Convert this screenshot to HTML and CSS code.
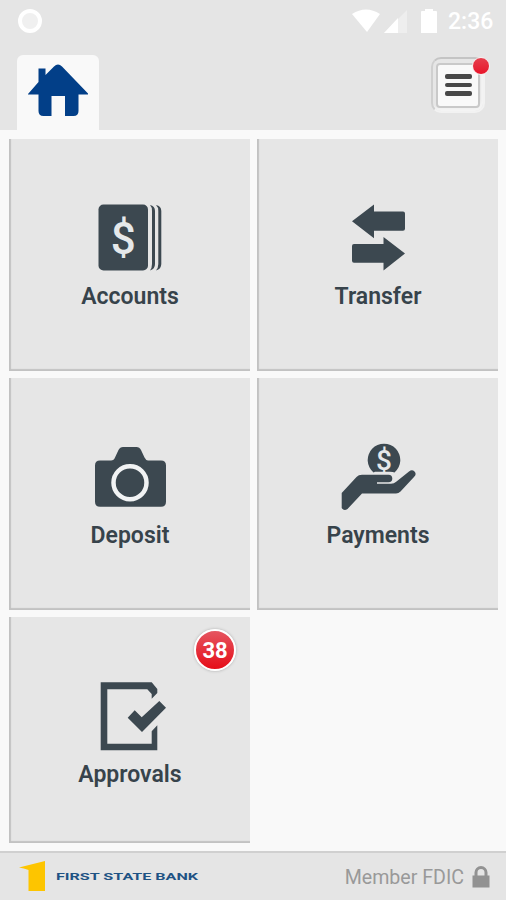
FILE: index.html
```html
<!DOCTYPE html>
<html lang="en">

<head>
    <meta charset="utf-8">
    <meta name="viewport" content="width=device-width, initial-scale=1.0">
    <title>First State Bank</title>
    <link rel="stylesheet" href="styles.css">
</head>

<body>
    <header>
        <div class="status">
            <span class="ring"></span>
            <svg class="signals" width="90" height="26" viewBox="0 0 90 26">
                <path d="M0 6Q14-3 28 6L15 24Z" />
                <path d="M32 25L55 2V25Z" opacity=".35" />
                <path d="M32 25L46 10V25Z" />
                <path d="M69 4Q69 3 70 3H73V1H81V3H84Q85 3 85 4V25H69Z" />
            </svg>
            <span class="time">2:36</span>
        </div>
        <nav>
            <a class="tab">
                <svg width="62" height="58" viewBox="0 0 62 58">
                    <path d="M1 34L11.5 22V8.5h7V15L27 6.5Q31 2.500 35 6.500L61 33.500V34.500H51.500V51Q51.500 56 46.500 56H38V36H24.500V56H16.500Q11.500 56 11.500 51V34.500H1Z" />
                </svg>
            </a>
            <button class="menu">
                <span class="lines"><i></i><i></i><i></i></span>
                <span class="dot"></span>
            </button>
        </nav>
    </header>

    <main>
        <article class="tile">
            <svg class="icon" width="80" height="80" viewBox="0 0 80 80">
                <rect x="8.500" y="4.500" width="49.500" height="66" rx="5" />
                <path d="M60 5Q65 6 65 11V64Q65 69 60 70.500Q62 68 62 64V11Q62 7 60 5Z" />
                <path d="M66 5Q71.300 6 71.300 11V64Q71.300 69 66 70.500Q68.300 68 68.300 64V11Q68.300 7 66 5Z" />
                <text class="dollar" x="33.300" y="53.500" font-size="44">$</text>
            </svg>
            <h2>Accounts</h2>
        </article>
        <article class="tile">
            <svg class="icon" width="80" height="80" viewBox="0 0 80 80">
                <path d="M14 21.300L36 4.500V11.500H65Q67 11.500 67 13.500V28.700Q67 30.700 65 30.700H36V38.300Z" />
                <path d="M67 53.500L45.500 37V44H16Q14 44 14 46V60.700Q14 62.700 16 62.700H45.500V70.500Z" />
            </svg>
            <h2>Transfer</h2>
        </article>
        <article class="tile">
            <svg class="icon" width="80" height="80" viewBox="0 0 80 80">
                <path d="M10 21.500H21Q24 21.500 25 18.500L28.500 11Q30 8 33 8H46.500Q49.500 8 51 11L54.500 18.500Q56 21.500 58 21.500H71Q76 21.500 76 26.500V62.700Q76 67.700 71 67.700H10Q5 67.700 5 62.700V26.500Q5 21.500 10 21.500Z" />
                <circle class="lens" cx="40" cy="43.700" r="16.500" />
            </svg>
            <h2>Deposit</h2>
        </article>
        <article class="tile">
            <svg class="icon" width="80" height="80" viewBox="0 0 80 80">
                <path d="M35.500 33.500A16.300 16.300 0 1 1 56.500 33.500Q55 32.800 52 32.800H37Z" />
                <text class="dollar" x="46" y="30.500" font-size="28">$</text>
                <path d="M3.700 54L18.500 38Q20.500 35.700 24 35.700H50.500Q54.300 35.700 54.300 39.500Q54.300 43.300 50.500 43.300H39V44.800H53Q56 44.800 58.500 42.500L71 32.500Q74 30 76.500 32.500Q79 35 76 38L62.500 52.500Q60.500 54.500 58 54.500H24L9.500 70Q6 72.500 3.700 69Z" />
            </svg>
            <h2>Payments</h2>
        </article>
        <article class="tile">
            <span class="badge">38</span>
            <svg class="icon" width="80" height="80" viewBox="0 0 80 80">
                <path d="M10.700 4.300H61.700L67.300 11V15L61.700 20.700V16L57.300 11.300H17.300V65.700H61.700V53.300L67.300 47.300V72.300H10.700Z" />
                <path d="M37.700 39.700L44.700 32.300L51.700 39.300L69.300 23L76 29.700L52 54Z" />
            </svg>
            <h2>Approvals</h2>
        </article>
    </main>

    <footer>
        <svg class="logo" width="182" height="34" viewBox="0 0 182 34">
            <path d="M1 7.500L27 1V31H10.500V10Q6 8 1 7.500Z" />
            <text x="38" y="19.800" textLength="142" lengthAdjust="spacingAndGlyphs">FIRST STATE BANK</text>
        </svg>
        <p class="member">Member FDIC</p>
        <svg class="lock" width="18" height="24" viewBox="0 0 18 24">
            <path d="M4 11V7.500a5 5 0 0 1 10 0V11" />
            <rect x=".5" y="10.500" width="17" height="12" />
        </svg>
    </footer>
</body>

</html>
```

FILE: styles.css
```css
* {
    box-sizing: border-box;
}

body {
    margin: 0;
    height: 900px;
    display: flex;
    flex-direction: column;
    background-color: #f9f9f9;
    font-family: Roboto, "Liberation Sans", sans-serif;
}

svg {
    display: block;
}

header {
    height: 130px;
    background-color: #e5e5e5;
}

.status {
    display: flex;
    align-items: center;
    height: 55px;
    padding: 0 13px 14px 18px;
    color: #fff;
}

.ring {
    width: 24px;
    height: 24px;
    border: 4px solid #fff;
    border-radius: 50%;
    background-color: #f0f0f0;
    margin-right: auto;
}

.signals {
    fill: #fff;
    margin-right: 6px;
}

.time {
    width: 45px;
    padding-top: 2px;
    font-size: 23px;
    font-weight: 500;
}

nav {
    display: flex;
    justify-content: space-between;
    height: 75px;
    padding: 0 21px 0 17px;
}

.tab {
    width: 82px;
    padding: 5px 10px;
    border-radius: 6px 6px 0 0;
    background-color: #f9f9f9;
    fill: #023f88;
}

.menu {
    position: relative;
    width: 54px;
    height: 56px;
    margin-top: 2px;
    padding: 3px;
    border: 2px solid #f2f2f2;
    border-top-color: #c4c4c4;
    border-left-color: #cfcfcf;
    border-radius: 10px;
    background-color: #e6e6e6;
    box-shadow: inset -2px -3px 2px #f4f4f4;
}

.lines {
    display: flex;
    flex-direction: column;
    align-items: center;
    justify-content: center;
    gap: 4px;
    height: 45px;
    border: 2px solid #c9c9c9;
    border-radius: 4px;
    background-color: #f9f9f9;
}

.lines i {
    width: 27px;
    height: 4.5px;
    border-radius: 2px;
    background-color: #484848;
}

.dot {
    position: absolute;
    top: -2px;
    right: -7px;
    width: 18px;
    height: 18px;
    border: 1px solid #f8eeee;
    border-radius: 50%;
    background: linear-gradient(#e63e4c, #e8152a);
}

main {
    flex: 1;
    display: grid;
    grid-template-columns: 241px 241px;
    grid-template-rows: 232px 232px 226px;
    gap: 7px;
    padding: 9px 9px 0;
}

.tile {
    position: relative;
    display: flex;
    flex-direction: column;
    align-items: center;
    padding-top: 61px;
    background-color: #e6e6e6;
    box-shadow: inset 2px -2px 1px #c2c2c2;
}

.icon {
    fill: #3c4850;
}

.dollar {
    fill: #e5e8ea;
    font-weight: 500;
    text-anchor: middle;
}

.lens {
    fill: none;
    stroke: #f1f3f4;
    stroke-width: 4.5;
}

h2 {
    margin: 4px 0 0;
    padding-left: 1px;
    font-size: 23px;
    font-weight: 600;
    line-height: 26px;
    color: #37434b;
}

.badge {
    position: absolute;
    top: 12px;
    right: 14px;
    width: 42px;
    height: 42px;
    border: 2px solid #fff;
    border-radius: 50%;
    background: linear-gradient(#e55560, #e60d18);
    box-shadow: 0 0 3px #aaa;
    color: #fff;
    font-size: 22px;
    font-weight: 700;
    line-height: 40px;
    text-align: center;
}

footer {
    display: flex;
    align-items: center;
    height: 49px;
    padding: 0 16px 0 18px;
    border-top: 2px solid #d0d0d0;
    background-color: #e5e5e5;
}

.logo {
    margin-right: auto;
}

.logo path {
    fill: #fdc500;
}

.logo text {
    fill: #1f5384;
    font-size: 9.5px;
    font-weight: 700;
}

.member {
    margin: 2px 8px 0 0;
    font-size: 19.6px;
    color: #999;
}

.lock {
    fill: #929292;
}

.lock path {
    fill: none;
    stroke: #929292;
    stroke-width: 3;
}
```
